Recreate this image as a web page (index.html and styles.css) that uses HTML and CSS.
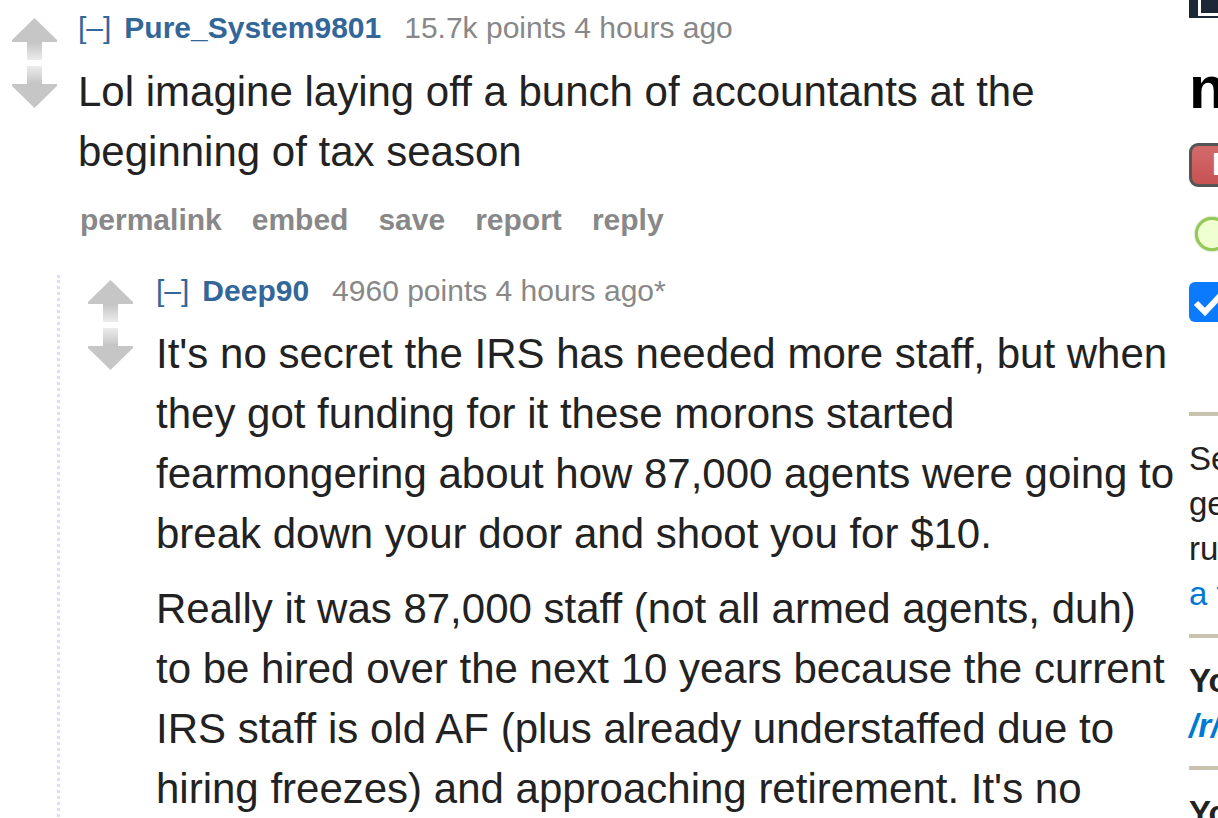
FILE: index.html
```html
<!DOCTYPE html>
<html lang="en">
<head>
    <meta charset="utf-8">
    <title>comments</title>
    <link rel="stylesheet" href="styles.css">
</head>
<body>
<div class="page">
    <div class="content">
        <!-- top level comment -->
        <div class="comment">
            <div class="midcol">
                <svg class="arrow" viewBox="0 0 45 42" width="45" height="42">
                    <defs>
                        <linearGradient id="stem-up" x1="0" y1="0" x2="0" y2="1">
                            <stop offset="0" stop-color="#c4c4c4"/>
                            <stop offset="1" stop-color="#ececec"/>
                        </linearGradient>
                        <linearGradient id="stem-down" x1="0" y1="0" x2="0" y2="1">
                            <stop offset="0" stop-color="#ececec"/>
                            <stop offset="1" stop-color="#c4c4c4"/>
                        </linearGradient>
                    </defs>
                    <polygon points="22.5,0 45,22 45,24 0,24 0,22" fill="#c6c6c6"/>
                    <rect x="15" y="24" width="15" height="18" fill="url(#stem-up)"/>
                </svg>
                <svg class="arrow down" viewBox="0 0 45 42" width="45" height="42">
                    <rect x="15" y="0" width="15" height="18" fill="url(#stem-down)"/>
                    <polygon points="0,18 45,18 45,20 22.5,42 0,20" fill="#c6c6c6"/>
                </svg>
            </div>
            <div class="entry">
                <p class="tagline"><a class="expand">[–]</a><a class="author">Pure_System9801</a><span class="score">15.7k points 4 hours ago</span></p>
                <div class="md">
                    <p>Lol imagine laying off a bunch of accountants at the beginning of tax season</p>
                </div>
                <ul class="buttons">
                    <li>permalink</li>
                    <li>embed</li>
                    <li>save</li>
                    <li>report</li>
                    <li>reply</li>
                </ul>
            </div>
        </div>

        <!-- reply -->
        <div class="child">
            <div class="comment">
                <div class="midcol">
                    <svg class="arrow" viewBox="0 0 45 42" width="45" height="42">
                        <polygon points="22.5,0 45,22 45,24 0,24 0,22" fill="#c6c6c6"/>
                        <rect x="15" y="24" width="15" height="18" fill="url(#stem-up)"/>
                    </svg>
                    <svg class="arrow down" viewBox="0 0 45 42" width="45" height="42">
                        <rect x="15" y="0" width="15" height="18" fill="url(#stem-down)"/>
                        <polygon points="0,18 45,18 45,20 22.5,42 0,20" fill="#c6c6c6"/>
                    </svg>
                </div>
                <div class="entry">
                    <p class="tagline"><a class="expand">[–]</a><a class="author">Deep90</a><span class="score">4960 points 4 hours ago*</span></p>
                    <div class="md">
                        <p>It's no secret the IRS has needed more staff, but when they got funding for it these morons started fearmongering about how 87,000 agents were going to break down your door and shoot you for $10.</p>
                        <p>Really it was 87,000 staff (not all armed agents, duh) to be hired over the next 10 years because the current IRS staff is old AF (plus already understaffed due to hiring freezes) and approaching retirement. It's no secret that they need the help.</p>
                    </div>
                </div>
            </div>
        </div>
    </div>

    <div class="side">
        <div class="side-top"><div class="side-icon"></div></div>
        <h1 class="side-title">news</h1>
        <div class="side-btn">leave</div>
        <div class="online-dot"></div>
        <div class="side-check">
            <svg viewBox="0 0 40 40" width="40" height="40"><path d="M7 21 L16 30 L33 12" fill="none" stroke="#fff" stroke-width="6"/></svg>
        </div>
        <div class="side-sep first"></div>
        <div class="side-md">
            <p>Self-posts are not allowed here.</p>
            <p>generally please read the</p>
            <p>rules before posting</p>
            <p><a>a full list of rules</a></p>
        </div>
        <div class="side-sep"></div>
        <div class="side-md">
            <p class="strong">You might also like</p>
            <p><a class="sub">/r/worldnews</a></p>
        </div>
        <div class="side-sep"></div>
        <div class="side-md">
            <p class="strong">You can also</p>
        </div>
    </div>
</div>
</body>
</html>
```

FILE: styles.css
```css
html{margin: 0; padding: 0;}
body{margin: 0; padding: 0; background: #fff; overflow: hidden; font-family: "Liberation Sans", Arial, sans-serif; color: #222;}
a{cursor: pointer;}

.page{display: flex; width: 1500px;}
.content{width: 1176px; flex: none;}

/* comment */
.comment{display: flex;}
.midcol{width: 45px; flex: none; margin: 18px 21px 0 12px; display: flex; flex-direction: column; gap: 6px;}
.arrow{display: block;}
.entry{flex: 1; min-width: 0;}

.tagline{margin: 13px 0 0; font-size: 30px; line-height: 30px; color: #888; white-space: nowrap;}
.tagline .expand{color: #369; margin-right: 13px;}
.tagline .author{color: #369; font-weight: bold; margin-right: 23px;}

.md{margin-top: 19px; font-size: 42px; line-height: 60px; color: #222;}
.md p{margin: 0 0 15px;}

.buttons{display: flex; gap: 30px; margin: 23px 0 0; padding: 0 0 0 2px; list-style: none; font-size: 30px; line-height: 30px; font-weight: bold; color: #888;}

/* child comments */
.child{margin: 40px 0 0 57px; border-left: 3px dotted #ddf;}
.child .midcol{margin: 5px 23px 0 28px;}
.child .tagline{margin-top: 1px;}
.child .md{margin-top: 18px;}

/* sidebar (cut off by the window) */
.side{width: 300px; flex: none; margin-left: 13px;}
.side-top{height: 18px; background: #1d2735; overflow: hidden;}
.side-icon{height: 13px; margin-left: 9px; border-left: 3px solid #fff; border-bottom: 3px solid #fff;}
.side-title{margin: 40px 0 0; font-size: 60px; line-height: 60px; font-weight: bold; color: #000;}
.side-btn{margin-top: 25px; height: 38px; line-height: 38px; padding-left: 20px; border: 3px solid #555; border-radius: 9px; background: linear-gradient(#d46a6a, #c75252); color: #fff; font-size: 30px; font-weight: bold;}
.online-dot{margin: 30px 0 0 6px; width: 28px; height: 28px; border-radius: 50%; border: 3px solid #94c95a; background: #efffd2; box-shadow: 0 0 2px #7cb342;}
.side-check{margin-top: 31px; width: 40px; height: 40px; border-radius: 6px; background: #0a7aff;}
.side-check svg{display: block;}
.side-sep{height: 4px; background: #c8c3ae;}
.side-sep.first{margin-top: 90px;}
.side-md{font-size: 33px; line-height: 45px; color: #222; white-space: nowrap; margin: 20px 0 18px;}
.side-md p{margin: 0;}
.side-md a{color: #0079d3;}
.side-md .strong{font-weight: bold;}
.side-md .sub{font-weight: bold; font-style: italic;}
```
